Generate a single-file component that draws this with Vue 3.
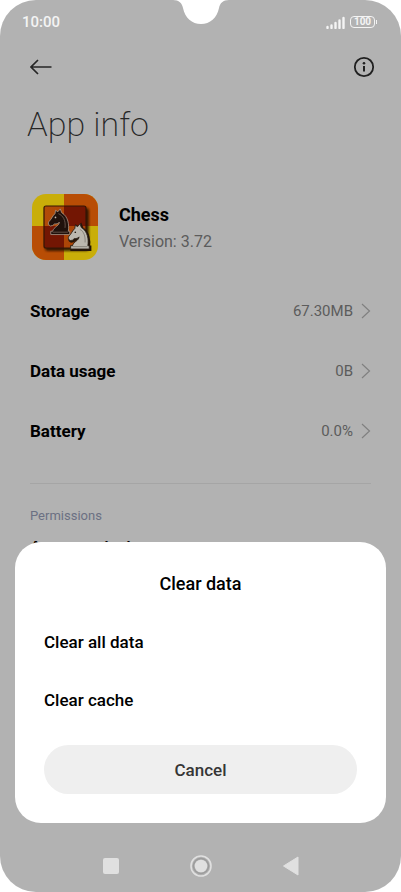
<script setup>
const rows = [
  { label: 'Storage', value: '67.30MB' },
  { label: 'Data usage', value: '0B' },
  { label: 'Battery', value: '0.0%' },
]
const actions = ['Clear all data', 'Clear cache']
const knight =
  'M5 29 H25 V25.500 H23.500 C24.500 19 23.500 10 16.500 6 L15 2 L12.500 5 L10 3.500 L9.500 7 C7 9 6 12.500 3 15.500 C2 17 2.500 19 4.500 20 L7 19.500 L9 17.800 C11 18 13 17.500 14 16 C14 20 8 21 7 25.500 H5 Z'
</script>

<template>
  <div class="phone">
    <svg class="notch" viewBox="0 0 56 24" aria-hidden="true">
      <path d="M0 0 C6 0 9 3 10 8 C12 18 19 24 28 24 C37 24 44 18 46 8 C47 3 50 0 56 0 Z" fill="#fff" />
    </svg>

    <header class="status">
      <span class="clock">10:00</span>
      <span class="status-icons">
        <svg class="signal" viewBox="0 0 20 13" aria-hidden="true">
          <path d="M1.500 11V12M5.500 9.500V12M9.500 7V12M13.500 4.500V12M17.500 2V12" />
        </svg>
        <span class="battery">100</span>
      </span>
    </header>

    <nav class="toolbar">
      <button class="icon-button" aria-label="Back">
        <svg width="22" height="22" viewBox="0 0 22 22">
          <path d="M21.500 11H1M8 4L1 11L8 18" fill="none" stroke="#262626" stroke-width="1.700" />
        </svg>
      </button>
      <button class="icon-button" aria-label="Information">
        <svg width="22" height="22" viewBox="0 0 22 22">
          <circle cx="11" cy="11" r="9.200" fill="none" stroke="#202020" stroke-width="1.800" />
          <path d="M11 10V15.500" stroke="#202020" stroke-width="2" />
          <circle cx="11" cy="7.300" r="1.300" fill="#202020" />
        </svg>
      </button>
    </nav>

    <main class="content">
      <h1>App info</h1>

      <section class="app">
        <svg class="app-icon" viewBox="0 0 66 66" aria-hidden="true">
          <defs>
            <clipPath id="tile"><rect width="66" height="66" rx="14" /></clipPath>
            <linearGradient id="panel" x1="0" y1="0" x2="1" y2="0">
              <stop offset="0" stop-color="#b14b08" />
              <stop offset="1" stop-color="#a94206" />
            </linearGradient>
            <filter id="soft" x="-20%" y="-20%" width="140%" height="140%">
              <feGaussianBlur stdDeviation="1.300" />
            </filter>
          </defs>
          <g clip-path="url(#tile)">
            <rect width="66" height="66" fill="#c9ae09" />
            <path d="M32 0H66V32H32ZM0 32H32V66H0Z" fill="#b84d05" />
            <rect x="13" y="14" width="44" height="43" rx="3" fill="#241000" opacity="0.850" filter="url(#soft)" />
            <rect x="12" y="12" width="42" height="42" rx="2" fill="url(#panel)" />
            <path d="M32 12H54V32H32ZM12 32H32V54H12Z" fill="#731603" />
            <rect x="12" y="12" width="42" height="42" rx="2" fill="none" stroke="#351706" stroke-width="1.200" />
          </g>
          <g transform="translate(14 13) scale(.95)">
            <path :d="knight" fill="#20110c" stroke="#a99c91" stroke-width=".8" />
            <path d="M13 7C18 9 21 14 20 22M7 26.500H23" fill="none" stroke="#776258" stroke-width=".8" />
            <circle cx="10" cy="11" r=".9" fill="#c4b9b0" />
          </g>
          <g transform="translate(34 28) scale(.93)">
            <path :d="knight" fill="#241509" stroke="#241509" stroke-width="2.600" transform="translate(1 1)" />
            <path :d="knight" fill="#bcb8ae" stroke="#2b2117" stroke-width=".9" />
            <path d="M15 8C19 10 21 15 20.500 22M7 26.500H23" fill="none" stroke="#77736b" stroke-width=".8" />
            <circle cx="10" cy="11" r=".9" fill="#2b2117" />
          </g>
        </svg>
        <div class="app-text">
          <h2>Chess</h2>
          <p class="version">Version: 3.72</p>
        </div>
      </section>

      <section class="rows">
        <a v-for="row in rows" :key="row.label" class="row" href="#">
          <span class="label">{{ row.label }}</span>
          <span class="value">{{ row.value }}</span>
          <svg width="10" height="16" viewBox="0 0 10 16" aria-hidden="true">
            <path d="M1 1L8.500 8L1 15" fill="none" stroke="#808080" stroke-width="1.200" />
          </svg>
        </a>
      </section>

      <section class="permissions">
        <h3>Permissions</h3>
        <a class="label" href="#">App permissions</a>
      </section>
    </main>

    <section class="dialog" role="dialog" aria-labelledby="dialog-title">
      <h2 id="dialog-title">Clear data</h2>
      <div class="actions">
        <button v-for="action in actions" :key="action" class="action">{{ action }}</button>
      </div>
      <button class="cancel">Cancel</button>
    </section>

    <footer class="navigation">
      <button class="icon-button" aria-label="Recent apps">
        <svg width="22" height="22" viewBox="0 0 22 22"><rect x="3" y="3" width="16" height="16" rx="2" fill="#e0e0e0" /></svg>
      </button>
      <button class="icon-button" aria-label="Home">
        <svg width="22" height="22" viewBox="0 0 22 22">
          <circle cx="11" cy="11" r="10" fill="none" stroke="#e0e0e0" stroke-width="1.600" />
          <circle cx="11" cy="11" r="7.500" fill="none" stroke="#9c9c9c" stroke-width="1.500" />
          <circle cx="11" cy="11" r="6.300" fill="#e0e0e0" />
        </svg>
      </button>
      <button class="icon-button" aria-label="Previous">
        <svg width="22" height="22" viewBox="0 0 22 22"><path d="M3.500 11L18 2V20Z" fill="#e0e0e0" stroke="#e0e0e0" stroke-linejoin="round" /></svg>
      </button>
    </footer>
  </div>
</template>

<style>
body {
  margin: 0;
  background: #fff;
}
</style>

<style scoped>
.phone {
  position: relative;
  display: flex;
  flex-direction: column;
  box-sizing: border-box;
  height: 100vh;
  overflow: hidden;
  border-radius: 36px;
  background: #b2b2b2;
  color: #000;
  font-family: Roboto, sans-serif;
}
.notch {
  position: absolute;
  top: 0;
  left: 50%;
  width: 56px;
  height: 24px;
  margin-left: -28px;
}
h1, h2, h3, p {
  margin: 0;
}
button {
  border: 0;
  padding: 0;
  background: none;
  color: inherit;
  font-family: inherit;
}
a {
  color: inherit;
  text-decoration: none;
}
svg {
  display: block;
}
.status {
  display: flex;
  justify-content: space-between;
  align-items: center;
  height: 44px;
  padding: 0 26px 0 22px;
  color: #f4f4f4;
}
.clock {
  font-size: 15px;
  font-weight: 500;
}
.status-icons {
  display: flex;
  align-items: center;
  gap: 4px;
}
.signal {
  width: 20px;
  height: 13px;
  fill: none;
  stroke: #f4f4f4;
  stroke-width: 2.4;
  stroke-linecap: round;
}
.battery {
  position: relative;
  box-sizing: border-box;
  width: 25px;
  height: 12px;
  border: 1px solid #f4f4f4;
  border-radius: 4px;
  font-size: 10px;
  font-weight: 700;
  line-height: 10px;
  text-align: center;
}
.battery::after {
  content: '';
  position: absolute;
  top: 3px;
  right: -3px;
  width: 1px;
  height: 4px;
  background: #f4f4f4;
}
.toolbar {
  display: flex;
  justify-content: space-between;
  align-items: center;
  height: 46px;
  padding: 0 26px 0 30px;
}
.content {
  flex: 1;
  min-height: 0;
  padding: 0 30px;
}
h1 {
  margin: 12px -3px 0;
  color: #262626;
  font-size: 34px;
  font-weight: 200;
  line-height: 44px;
}
.app {
  display: flex;
  align-items: center;
  gap: 21px;
  margin: 48px 2px 0;
}
.app-icon {
  width: 66px;
  height: 66px;
}
.app-text {
  padding-top: 2px;
}
.app h2 {
  font-size: 18px;
  font-weight: 700;
  line-height: 28px;
}
.version {
  color: #5c5c5c;
  font-size: 16px;
  line-height: 26px;
}
.rows {
  margin-top: 21px;
  padding-bottom: 22px;
  border-bottom: 1px solid #a5a5a5;
}
.row {
  display: flex;
  align-items: center;
  height: 60px;
}
.label {
  font-size: 17px;
  font-weight: 700;
  line-height: 24px;
}
.value {
  margin-left: auto;
  margin-right: 8px;
  color: #5c5c5c;
  font-size: 15px;
}
.permissions {
  padding-top: 22px;
}
.permissions h3 {
  margin-bottom: 9px;
  color: #6b7083;
  font-size: 13px;
  font-weight: 400;
  line-height: 20px;
}
.dialog {
  position: absolute;
  right: 15px;
  bottom: 69px;
  left: 15px;
  display: flex;
  flex-direction: column;
  gap: 16px;
  padding: 29px;
  border-radius: 26px;
  background: #fff;
}
.dialog h2 {
  font-size: 18px;
  font-weight: 500;
  line-height: 26px;
  text-align: center;
}
.actions {
  display: flex;
  flex-direction: column;
}
.action {
  height: 58px;
  font-size: 17px;
  font-weight: 500;
  text-align: left;
}
.cancel {
  height: 49px;
  border-radius: 25px;
  background: #efefef;
  color: #363636;
  font-size: 17px;
  font-weight: 500;
}
.navigation {
  display: flex;
  justify-content: center;
  align-items: center;
  gap: 68px;
  height: 53px;
}
</style>
